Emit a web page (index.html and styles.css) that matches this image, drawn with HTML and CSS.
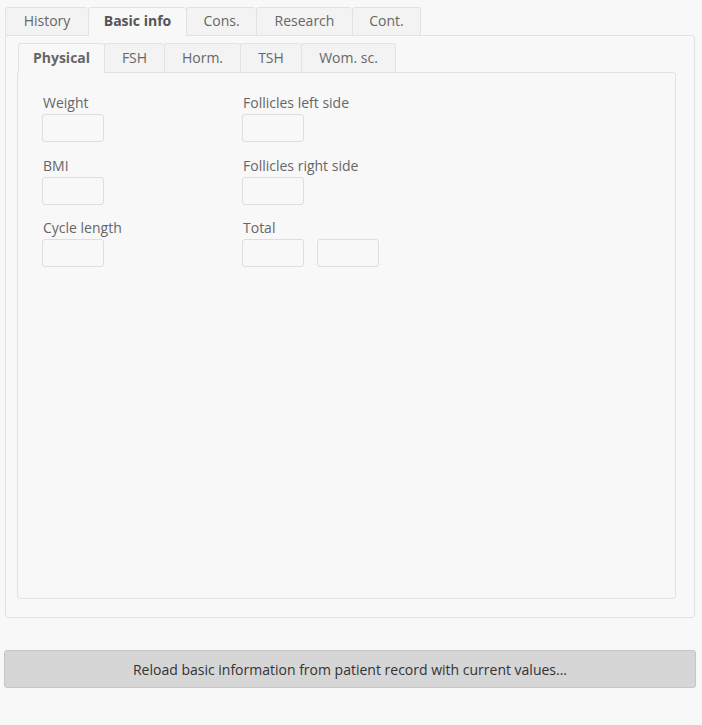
FILE: index.html
```html
<!DOCTYPE html>
<html lang="en">

<head>
    <meta charset="UTF-8" />
    <meta name="viewport" content="width=device-width, initial-scale=1.0" />
    <title>Basic info</title>
    <link rel="stylesheet" href="styles.css">
</head>

<body>
    <div class="main-container">
        <nav class="tabs outer-tabs">
            <span class="tab">History</span>
            <span class="tab active">Basic info</span>
            <span class="tab">Cons.</span>
            <span class="tab">Research</span>
            <span class="tab">Cont.</span>
        </nav>
        <div class="panel outer-panel">
            <nav class="tabs inner-tabs">
                <span class="tab">Physical</span>
                <span class="tab">FSH</span>
                <span class="tab">Horm.</span>
                <span class="tab">TSH</span>
                <span class="tab">Wom. sc.</span>
            </nav>
            <div class="panel inner-panel">
                <div class="form-grid">
                    <div class="field">
                        <label>Weight</label>
                        <input type="text" />
                    </div>
                    <div class="field">
                        <label>Follicles left side</label>
                        <input type="text" />
                    </div>
                    <div class="field">
                        <label>BMI</label>
                        <input type="text" />
                    </div>
                    <div class="field">
                        <label>Follicles right side</label>
                        <input type="text" />
                    </div>
                    <div class="field">
                        <label>Cycle length</label>
                        <input type="text" />
                    </div>
                    <div class="field">
                        <label>Total</label>
                        <div class="pair">
                            <input type="text" />
                            <input type="text" />
                        </div>
                    </div>
                </div>
            </div>
        </div>
        <button class="reload">Reload basic information from patient record with current values...</button>
    </div>
</body>

</html>
```

FILE: styles.css
```css
html,
body {
    margin: 0;
    padding: 0;
    height: 100%;
    background-color: #f8f8f8;
}

body {
    font-family: "Open Sans", "Noto Sans", sans-serif;
    font-size: 14px;
    color: #666;
}

.main-container {
    padding: 7px 7px 0 5px;
}

.tabs {
    display: flex;
    height: 28px;
}

.tab {
    box-sizing: border-box;
    height: 28px;
    line-height: 26px;
    border: 1px solid #e2e2e2;
    border-bottom: none;
    border-right: none;
    border-radius: 3px 3px 0 0;
    background-color: #f3f3f3;
    text-align: center;
}

.tab:last-child {
    border-right: 1px solid #e2e2e2;
}

.tab.active {
    background-color: #f8f8f8;
    font-weight: bold;
    color: #555;
    height: 29px;
    position: relative;
    z-index: 1;
}

.outer-tabs .tab:nth-child(1) { width: 83px; }
.outer-tabs .tab:nth-child(2) { width: 98px; }
.outer-tabs .tab:nth-child(3) { width: 70px; }
.outer-tabs .tab:nth-child(4) { width: 96px; }
.outer-tabs .tab:nth-child(5) { width: 69px; }

.inner-tabs {
    height: 29px;
    margin-left: 1px;
}

.inner-tabs .tab {
    height: 29px;
    line-height: 28px;
}

.inner-tabs .tab:nth-child(1) {
    width: 86px;
    background-color: #f8f8f8;
    font-weight: bold;
    color: #666;
    height: 30px;
    position: relative;
    z-index: 1;
}
.inner-tabs .tab:nth-child(2) { width: 60px; }
.inner-tabs .tab:nth-child(3) { width: 76px; }
.inner-tabs .tab:nth-child(4) { width: 61px; }
.inner-tabs .tab:nth-child(5) { width: 95px; }

.panel {
    box-sizing: border-box;
    border: 1px solid #e2e2e2;
    border-radius: 3px;
}

.outer-panel {
    height: 583px;
    padding: 7px 18px 18px 11px;
    border-top-left-radius: 0;
}

.inner-panel {
    height: 527px;
    border-top-left-radius: 0;
    padding: 19px 25px;
}

.form-grid {
    display: grid;
    grid-template-columns: 200px 200px;
    row-gap: 12.5px;
}

.field label {
    display: block;
    height: 22px;
    line-height: 22px;
}

.field input {
    box-sizing: border-box;
    width: 62px;
    height: 28px;
    margin: 0;
    margin-left: -1px;
    border: 1px solid #dedede;
    border-radius: 3px;
    background-color: #f8f8f8;
}

.pair {
    display: flex;
    gap: 14px;
}

.reload {
    display: block;
    box-sizing: border-box;
    width: 692px;
    height: 38px;
    margin: 32px 0 0 -1px;
    border: 1px solid #c6c6c6;
    border-radius: 3px;
    background-color: #d6d6d6;
    color: #333;
    font-family: "Open Sans", "Noto Sans", sans-serif;
    font-size: 14px;
}
```
